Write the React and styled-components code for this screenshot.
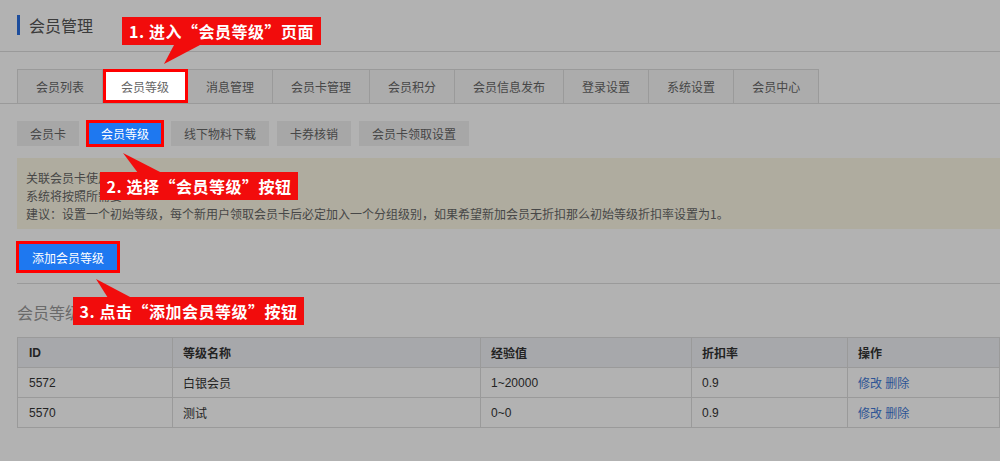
import React from 'react';
import styled, { createGlobalStyle } from 'styled-components';

const GlobalStyle = createGlobalStyle`
  body {
    margin: 0;
    background: #fff;
    font-family: "Liberation Sans", "Noto Sans CJK SC", sans-serif;
    font-size: 12px;
    color: #555;
    overflow: hidden;
  }
`;

// DATA
const tabs = ['会员列表', '会员等级', '消息管理', '会员卡管理', '会员积分', '会员信息发布', '登录设置', '系统设置', '会员中心'];
const subs = ['会员卡', '会员等级', '线下物料下载', '卡券核销', '会员卡领取设置'];
const cols = [155, 308, 211, 156, null];
const rows = [
  { id: '5572', name: '白银会员', exp: '1~20000', rate: '0.9' },
  { id: '5570', name: '测试', exp: '0~0', rate: '0.9' },
];

export default function App() {
  return (
    <Page>
      <GlobalStyle />
      <Header>
        <h2>会员管理</h2>
      </Header>

      <TabBar>
        {tabs.map((t, i) => (
          <Tab key={t} $active={i === 1}>{t}</Tab>
        ))}
      </TabBar>

      <Content>
        <SubBar>
          {subs.map((s, i) => (
            <SubButton key={s} $active={i === 1}>{s}</SubButton>
          ))}
        </SubBar>

        <Notice>
          <p>关联会员卡使用</p>
          <p>系统将按照所需要</p>
          <p>建议：设置一个初始等级，每个新用户领取会员卡后必定加入一个分组级别，如果希望新加会员无折扣那么初始等级折扣率设置为1。</p>
        </Notice>

        <AddButton>添加会员等级</AddButton>
        <Divider />

        <SectionTitle>会员等级</SectionTitle>

        <Table>
          <colgroup>
            {cols.map((w, i) => <Col key={i} $w={w} />)}
          </colgroup>
          <thead>
            <tr>
              <th>ID</th>
              <th>等级名称</th>
              <th>经验值</th>
              <th>折扣率</th>
              <th>操作</th>
            </tr>
          </thead>
          <tbody>
            {rows.map(r => (
              <tr key={r.id}>
                <td>{r.id}</td>
                <td>{r.name}</td>
                <td>{r.exp}</td>
                <td>{r.rate}</td>
                <td><Link>修改</Link> <Link>删除</Link></td>
              </tr>
            ))}
          </tbody>
        </Table>
      </Content>

      <Mask />

      <Callout $top={17} $left={122} $w={199}>
        <Arrow points="42,47 52,28 78,28" />
        1. 进入“会员等级”页面
      </Callout>
      <Callout $top={172} $left={100} $w={198}>
        <Arrow points="23,-19 38,1 62,1" />
        2. 选择“会员等级”按钮
      </Callout>
      <Callout $top={297} $left={73} $w={231}>
        <Arrow points="23,-18 35,1 59,1" />
        3. 点击“添加会员等级”按钮
      </Callout>
    </Page>
  );
}

function Arrow({ points }) {
  return (
    <ArrowSvg width="1" height="1">
      <polygon points={points} fill="#f20c0c" />
    </ArrowSvg>
  );
}

const Page = styled.div`
  position: relative;
  width: 1000px;
  height: 461px;
`;

const Header = styled.div`
  box-sizing: border-box;
  height: 52px;
  border-bottom: 1px solid #ddd;
  padding-left: 17px;
  display: flex;
  align-items: center;

  h2 {
    margin: 0 0 2px 0;
    border-left: 3px solid #2a6fe0;
    padding-left: 9px;
    font-size: 16px;
    font-weight: normal;
    line-height: 20px;
    color: #555;
    font-family: "Noto Sans CJK SC", sans-serif;
  }
`;

const TabBar = styled.div`
  display: flex;
  margin-top: 17px;
  padding-left: 17px;
  border-bottom: 1px solid #ddd;
`;

const Tab = styled.div`
  height: 34px;
  box-sizing: border-box;
  padding: 0 18px;
  display: flex;
  align-items: center;
  justify-content: center;
  border-top: 1px solid #ddd;
  border-right: 1px solid #ddd;
  background: #f7f7f7;
  color: #666;
  font-family: "Noto Sans CJK SC", sans-serif;

  &:first-child { border-left: 1px solid #ddd; }

  ${p => p.$active && `
    position: relative;
    z-index: 20;
    background: #fff;
    border-top: 1px solid #6a9ff0;
    outline: 3px solid #f00;
    outline-offset: -3px;
  `}
`;

const Content = styled.div`
  padding-left: 17px;
`;

const SubBar = styled.div`
  display: flex;
  gap: 8px;
  margin-top: 17px;
`;

const SubButton = styled.div`
  height: 25px;
  padding: 0 13px;
  display: flex;
  align-items: center;
  background: #f0f0f0;
  color: #666;
  font-family: "Noto Sans CJK SC", sans-serif;

  ${p => p.$active && `
    position: relative;
    z-index: 20;
    background: #1e78f0;
    color: #fff;
    padding: 0 14px;
    outline: 3px solid #f00;
    outline-offset: -2px;
  `}
`;

const Notice = styled.div`
  margin-top: 12px;
  background: #fbf7e4;
  padding: 11px 9px 6px;
  color: #666;
  font-family: "Noto Sans CJK SC", sans-serif;

  p {
    margin: 0;
    line-height: 18px;
  }
`;

const AddButton = styled.div`
  position: relative;
  z-index: 20;
  margin-top: 13px;
  width: 102px;
  height: 30px;
  display: flex;
  align-items: center;
  justify-content: center;
  background: #1e78f0;
  color: #fff;
  font-family: "Noto Sans CJK SC", sans-serif;
  outline: 3px solid #f00;
  outline-offset: -2px;
`;

const Divider = styled.div`
  margin-top: 11px;
  border-top: 1px solid #ddd;
`;

const SectionTitle = styled.h3`
  margin: 17px 0 0;
  font-size: 16px;
  line-height: 22px;
  font-weight: normal;
  color: #999;
  font-family: "Noto Sans CJK SC", sans-serif;
`;

const Col = styled.col`
  width: ${p => (p.$w ? `${p.$w}px` : 'auto')};
`;

const Table = styled.table`
  margin-top: 14px;
  width: 983px;
  border-collapse: collapse;
  table-layout: fixed;

  th, td {
    height: 29px;
    padding: 0 10px;
    text-align: left;
    border: 1px solid #ddd;
    border-left: none;
    color: #333;
    font-size: 12px;
    white-space: nowrap;
    font-family: "Liberation Sans", "Noto Sans CJK SC", sans-serif;
  }
  th:first-child, td:first-child {
    border-left: 1px solid #ddd;
    padding-left: 11px;
  }
  th {
    background: #f0f1f5;
    font-weight: bold;
  }
`;

const Link = styled.a`
  color: #3f79d6;
  cursor: pointer;
`;

const Mask = styled.div`
  position: fixed;
  inset: 0;
  background: rgba(0, 0, 0, 0.3);
  z-index: 10;
`;

const Callout = styled.div`
  position: absolute;
  z-index: 30;
  top: ${p => p.$top}px;
  left: ${p => p.$left}px;
  width: ${p => p.$w}px;
  height: 28px;
  background: #f20c0c;
  color: #fff;
  font-family: "Noto Sans CJK SC", sans-serif;
  font-weight: bold;
  font-size: 16px;
  letter-spacing: 0.5px;
  display: flex;
  align-items: center;
  justify-content: center;
  white-space: nowrap;
`;

const ArrowSvg = styled.svg`
  position: absolute;
  top: 0;
  left: 0;
  overflow: visible;
`;
